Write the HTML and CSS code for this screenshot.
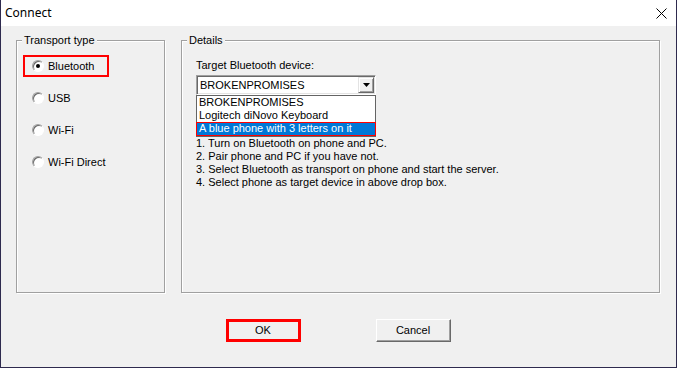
FILE: index.html
```html
<!DOCTYPE html>
<html>
<head>
<meta charset="utf-8">
<title>Connect</title>
<link rel="stylesheet" href="styles.css">
</head>
<body>
<div class="window">
  <div class="titlebar">
    <span class="title">Connect</span>
    <svg class="close" width="11" height="11" viewBox="0 0 11 11"><path d="M0.5 0.5 L10.5 10.5 M10.5 0.5 L0.5 10.5" stroke="#000" stroke-width="1" fill="none"/></svg>
  </div>
  <div class="body">
    <div class="groups">
      <div class="group transport">
        <span class="group-title">Transport type</span>
        <div class="radio-row"><span class="radio checked"></span><span>Bluetooth</span><span class="mark"></span></div>
        <div class="radio-row"><span class="radio"></span><span>USB</span></div>
        <div class="radio-row"><span class="radio"></span><span>Wi-Fi</span></div>
        <div class="radio-row"><span class="radio"></span><span>Wi-Fi Direct</span></div>
      </div>
      <div class="group details">
        <span class="group-title">Details</span>
        <div class="field-label">Target Bluetooth device:</div>
        <div class="combo">
          <span class="combo-text">BROKENPROMISES</span>
          <span class="combo-btn"><svg width="7" height="4" viewBox="0 0 7 4"><polygon points="0,0 7,0 3.5,4" fill="#000"/></svg></span>
        </div>
        <div class="list">
          <div class="item">BROKENPROMISES</div>
          <div class="item">Logitech diNovo Keyboard</div>
          <div class="item selected">A blue phone with 3 letters on it<span class="item-mark"></span></div>
        </div>
        <div class="steps">
          <div>1. Turn on Bluetooth on phone and PC.</div>
          <div>2. Pair phone and PC if you have not.</div>
          <div>3. Select Bluetooth as transport on phone and start the server.</div>
          <div>4. Select phone as target device in above drop box.</div>
        </div>
      </div>
    </div>
    <div class="buttons">
      <div class="btn">OK<span class="btn-mark"></span></div>
      <div class="btn">Cancel</div>
    </div>
  </div>
</div>
</body>
</html>
```

FILE: styles.css
```css
html, body {
  margin: 0;
  padding: 0;
  background: #f0f0f0;
}

.window {
  width: 677px;
  height: 368px;
  box-sizing: border-box;
  border-left: 1px solid #2e2a4e;
  border-right: 1px solid #2e2a4e;
  border-bottom: 1px solid #2e2a4e;
  display: flex;
  flex-direction: column;
  font-family: "Liberation Sans", Arial, sans-serif;
  font-size: 11px;
  color: #000;
}

.titlebar {
  height: 26px;
  flex: none;
  background: #fff;
  display: flex;
  align-items: center;
  justify-content: space-between;
  padding-left: 4px;
  padding-right: 9px;
}

.title {
  font-family: "Noto Sans", "Open Sans", sans-serif;
  font-size: 12px;
  line-height: 16px;
}

.close {
  display: block;
  margin-top: 1px;
}

.body {
  flex: 1;
  background: #f0f0f0;
  padding: 14px 16px 0 15px;
  display: flex;
  flex-direction: column;
}

.groups {
  display: flex;
  gap: 16px;
}

.group {
  position: relative;
  box-sizing: border-box;
  height: 253px;
  border: 1px solid #a0a0a0;
  box-shadow: inset 1px 1px 0 #fff, 1px 1px 0 #fff;
}

.group-title {
  position: absolute;
  top: -7px;
  left: 5px;
  padding: 0 2px;
  background: #f0f0f0;
  line-height: 13px;
}

.transport {
  width: 149px;
  padding: 9px 0 0 15px;
}

.details {
  width: 479px;
  padding: 18px 0 0 14px;
}

.radio-row {
  position: relative;
  height: 32px;
  display: flex;
  align-items: center;
  gap: 4px;
  line-height: 13px;
}

.radio {
  width: 12px;
  height: 12px;
  box-sizing: border-box;
  border-radius: 50%;
  border: 1px solid;
  border-color: #a0a0a0 #fff #fff #a0a0a0;
  box-shadow: inset 1px 1px 0 #696969;
  background: #fff;
  display: flex;
  align-items: center;
  justify-content: center;
}

.radio.checked::after {
  content: "";
  width: 4px;
  height: 4px;
  border-radius: 50%;
  background: #000;
}

.mark {
  position: absolute;
  left: -9px;
  top: 5px;
  width: 86px;
  height: 22px;
  box-sizing: border-box;
  border: 2px solid #f00;
}

.field-label {
  line-height: 13px;
}

.combo {
  margin-top: 3px;
  width: 180px;
  height: 20px;
  box-sizing: border-box;
  border: 1px solid;
  border-color: #a0a0a0 #fff #fff #a0a0a0;
  box-shadow: inset 1px 1px 0 #696969, inset -1px -1px 0 #e3e3e3;
  background: #fff;
  display: flex;
  align-items: center;
  justify-content: space-between;
  padding: 1px;
}

.combo-text {
  padding-left: 2px;
  line-height: 13px;
}

.combo-btn {
  width: 16px;
  height: 16px;
  box-sizing: border-box;
  background: #f0f0f0;
  border: 1px solid;
  border-color: #e3e3e3 #696969 #696969 #e3e3e3;
  box-shadow: inset 1px 1px 0 #fff, inset -1px -1px 0 #a0a0a0;
  display: flex;
  align-items: center;
  justify-content: center;
}

.combo-btn svg {
  display: block;
}

.list {
  width: 180px;
  height: 42px;
  box-sizing: border-box;
  border: 1px solid #646464;
  background: #fff;
}

.item {
  position: relative;
  height: 13px;
  line-height: 13px;
  padding-left: 2px;
  white-space: nowrap;
}

.item.selected {
  background: #0078d7;
  color: #fff;
}

.item-mark {
  position: absolute;
  top: 0;
  left: -1px;
  right: -1px;
  bottom: -1px;
  border: 1px solid #f00;
}

.steps {
  line-height: 13px;
  white-space: nowrap;
}

.buttons {
  margin-top: 26px;
  display: flex;
  justify-content: center;
  gap: 75px;
}

.btn {
  position: relative;
  width: 75px;
  height: 23px;
  box-sizing: border-box;
  border: 1px solid;
  border-color: #fff #696969 #696969 #fff;
  box-shadow: inset -1px -1px 0 #a0a0a0;
  background: #f0f0f0;
  display: flex;
  align-items: center;
  justify-content: center;
  line-height: 13px;
}

.btn-mark {
  position: absolute;
  top: -1px;
  left: -1px;
  width: 75px;
  height: 23px;
  box-sizing: border-box;
  border: 3px solid #f00;
}
```
